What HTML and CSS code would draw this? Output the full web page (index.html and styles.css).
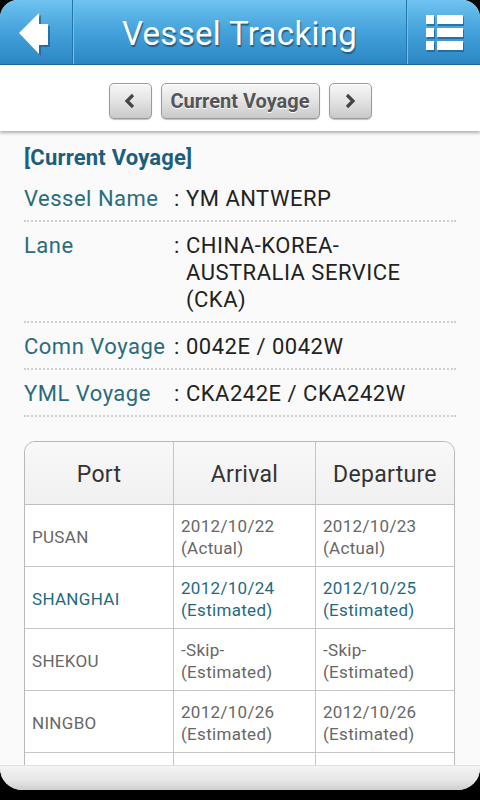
FILE: index.html
```html
<!DOCTYPE html>
<html lang="en">
<head>
    <meta charset="UTF-8">
    <meta name="viewport" content="width=device-width, initial-scale=1.0">
    <title>Vessel Tracking</title>
    <link rel="stylesheet" href="styles.css">
</head>
<body>

    <div class="screen">
        <div class="topbar">
            <div class="back">
                <svg width="72" height="64" viewBox="0 0 72 64">
                    <polygon class="icon-shadow" points="19,33 39,13 39,24 48,24 48,45 39,45 39,54" transform="translate(2,2)"/>
                    <polygon class="icon-fill" points="19,33 39,13 39,24 48,24 48,45 39,45 39,54"/>
                </svg>
            </div>
            <h1 class="title">Vessel Tracking</h1>
            <div class="menu">
                <svg width="42" height="42" viewBox="0 0 42 42">
                    <g class="icon-shadow" transform="translate(1,2)">
                        <rect x="2" y="2" width="8" height="9"/>
                        <rect x="13" y="2" width="26" height="9"/>
                        <rect x="2" y="15" width="8" height="9"/>
                        <rect x="13" y="15" width="26" height="9"/>
                        <rect x="2" y="28" width="8" height="9"/>
                        <rect x="13" y="28" width="26" height="9"/>
                    </g>
                    <g class="icon-fill">
                        <rect x="2" y="2" width="8" height="9"/>
                        <rect x="13" y="2" width="26" height="9"/>
                        <rect x="2" y="15" width="8" height="9"/>
                        <rect x="13" y="15" width="26" height="9"/>
                        <rect x="2" y="28" width="8" height="9"/>
                        <rect x="13" y="28" width="26" height="9"/>
                    </g>
                </svg>
            </div>
        </div>

        <div class="pager">
            <button class="pager-btn small">
                <svg width="14" height="16" viewBox="0 0 14 16"><polyline points="10,2 4,8 10,14" /></svg>
            </button>
            <button class="pager-btn wide">Current Voyage</button>
            <button class="pager-btn small">
                <svg width="14" height="16" viewBox="0 0 14 16"><polyline points="4,2 10,8 4,14" /></svg>
            </button>
        </div>

        <div class="content">
            <h2 class="section-title">[Current Voyage]</h2>

            <div class="info-row">
                <span class="label">Vessel Name</span>
                <span class="colon">:</span>
                <span class="value">YM ANTWERP</span>
            </div>
            <div class="info-row">
                <span class="label">Lane</span>
                <span class="colon">:</span>
                <span class="value">CHINA-KOREA-<br>AUSTRALIA SERVICE<br>(CKA)</span>
            </div>
            <div class="info-row">
                <span class="label">Comn Voyage</span>
                <span class="colon">:</span>
                <span class="value">0042E / 0042W</span>
            </div>
            <div class="info-row">
                <span class="label">YML Voyage</span>
                <span class="colon">:</span>
                <span class="value">CKA242E / CKA242W</span>
            </div>

            <table class="schedule">
                <thead>
                    <tr>
                        <th>Port</th>
                        <th>Arrival</th>
                        <th>Departure</th>
                    </tr>
                </thead>
                <tbody>
                    <tr>
                        <td>PUSAN</td>
                        <td>2012/10/22<br>(Actual)</td>
                        <td>2012/10/23<br>(Actual)</td>
                    </tr>
                    <tr class="current">
                        <td>SHANGHAI</td>
                        <td>2012/10/24<br>(Estimated)</td>
                        <td>2012/10/25<br>(Estimated)</td>
                    </tr>
                    <tr>
                        <td>SHEKOU</td>
                        <td>-Skip-<br>(Estimated)</td>
                        <td>-Skip-<br>(Estimated)</td>
                    </tr>
                    <tr>
                        <td>NINGBO</td>
                        <td>2012/10/26<br>(Estimated)</td>
                        <td>2012/10/26<br>(Estimated)</td>
                    </tr>
                    <tr>
                        <td></td>
                        <td></td>
                        <td></td>
                    </tr>
                </tbody>
            </table>
        </div>

        <div class="footer"></div>
    </div>

</body>
</html>
```

FILE: styles.css
```css
body {
    margin: 0;
    background-color: #000;
    font-family: Roboto, "Liberation Sans", sans-serif;
}
.screen {
    width: 480px;
    height: 790px;
    display: flex;
    flex-direction: column;
    overflow: hidden;
    border-radius: 18px 18px 22px 22px;
    background-color: #fafafa;
}

/* Top bar */
.topbar {
    height: 65px;
    display: flex;
    background: linear-gradient(to bottom, #6fc3f0 0%, #47a4dc 45%, #2c86c3 100%);
    border-bottom: 1px solid #1d6a9c;
    box-sizing: border-box;
}
.back, .menu {
    display: flex;
    align-items: center;
    justify-content: center;
}
.back {
    width: 72px;
    border-right: 1px solid #2474aa;
    box-shadow: 1px 0 0 #74c1ec;
}
.back svg {
    display: block;
}
.menu {
    width: 73px;
    border-left: 1px solid #2474aa;
    box-shadow: inset 1px 0 0 #74c1ec;
}
.menu svg {
    margin-left: 2px;
    margin-top: 4px;
}
.icon-fill {
    fill: #fff;
}
.icon-shadow {
    fill: #1a5f8e;
    opacity: 0.7;
}
.title {
    flex: 1;
    margin: 0;
    text-align: center;
    color: #fff;
    font-size: 33px;
    font-weight: normal;
    line-height: 68px;
    letter-spacing: 0.3px;
    text-shadow: 1px 2px 1px #1f5f88;
}

/* Pager */
.pager {
    height: 66px;
    display: flex;
    align-items: center;
    justify-content: center;
    gap: 9px;
    padding-top: 6px;
    box-sizing: border-box;
    background-color: #fff;
    position: relative;
    z-index: 1;
    box-shadow: 0 2px 3px rgba(0, 0, 0, 0.3);
}
.pager-btn {
    height: 36px;
    border: 1px solid #9a9a9a;
    border-radius: 5px;
    background: linear-gradient(to bottom, #f7f7f7 0%, #e3e3e3 50%, #c9c9c9 100%);
    box-shadow: inset 0 1px 0 #fff, 0 1px 1px rgba(0, 0, 0, 0.25);
    color: #555;
    font-family: Roboto, "Liberation Sans", sans-serif;
    font-weight: bold;
    font-size: 20px;
    text-shadow: 0 1px 0 #fff;
    padding: 0;
    display: flex;
    align-items: center;
    justify-content: center;
}
.pager-btn.small {
    width: 43px;
}
.pager-btn.wide {
    width: 159px;
}
.pager-btn polyline {
    fill: none;
    stroke: #444;
    stroke-width: 3.2;
}

/* Content */
.content {
    flex: 1;
    min-height: 0;
    overflow: hidden;
    padding: 14px 24px 0 24px;
    background-color: #fafafa;
}
.section-title {
    margin: 0 0 4px 0;
    font-size: 22px;
    line-height: 26px;
    font-weight: bold;
    letter-spacing: 0.2px;
    color: #1d5e7c;
}
.info-row {
    display: grid;
    grid-template-columns: 149px 13px 1fr;
    padding: 10px 0 8px 0;
    font-size: 22px;
    line-height: 27px;
    letter-spacing: 0.5px;
    border-bottom: 2px dotted #cfcfcf;
}
.label {
    color: #2a6c7d;
    white-space: nowrap;
}
.colon, .value {
    color: #222;
}
.colon {
    padding-left: 1px;
}

/* Schedule table */
.schedule {
    width: 431px;
    margin-top: 24px;
    border-collapse: separate;
    border-spacing: 0;
    border: 1px solid #b9b9b9;
    border-radius: 11px 11px 0 0;
    background-color: #fff;
    table-layout: fixed;
}
.schedule th, .schedule td {
    box-sizing: border-box;
}
.schedule th:nth-child(1) {
    width: 148px;
}
.schedule th:nth-child(2) {
    width: 142px;
}
.schedule th {
    height: 63px;
    padding: 2px 0 0 0;
    font-size: 23px;
    font-weight: normal;
    letter-spacing: 0.3px;
    color: #333;
    background: linear-gradient(to bottom, #f8f8f8, #f0f0f0);
    border-bottom: 1px solid #bdbdbd;
}
.schedule th:first-child {
    border-top-left-radius: 11px;
}
.schedule th:last-child {
    border-top-right-radius: 11px;
}
.schedule th + th, .schedule td + td {
    border-left: 1px solid #c6c6c6;
}
.schedule td {
    height: 62px;
    padding: 2px 0 0 7px;
    font-size: 17px;
    line-height: 22px;
    letter-spacing: 0.3px;
    color: #676767;
    border-bottom: 1px solid #c6c6c6;
}
.schedule tr.current td {
    color: #1f6a80;
}

.footer {
    height: 24px;
    background: linear-gradient(to bottom, #f4f4f4 0%, #e6e6e6 60%, #cfcfcf 100%);
    border-top: 1px solid #e0e0e0;
}
```
